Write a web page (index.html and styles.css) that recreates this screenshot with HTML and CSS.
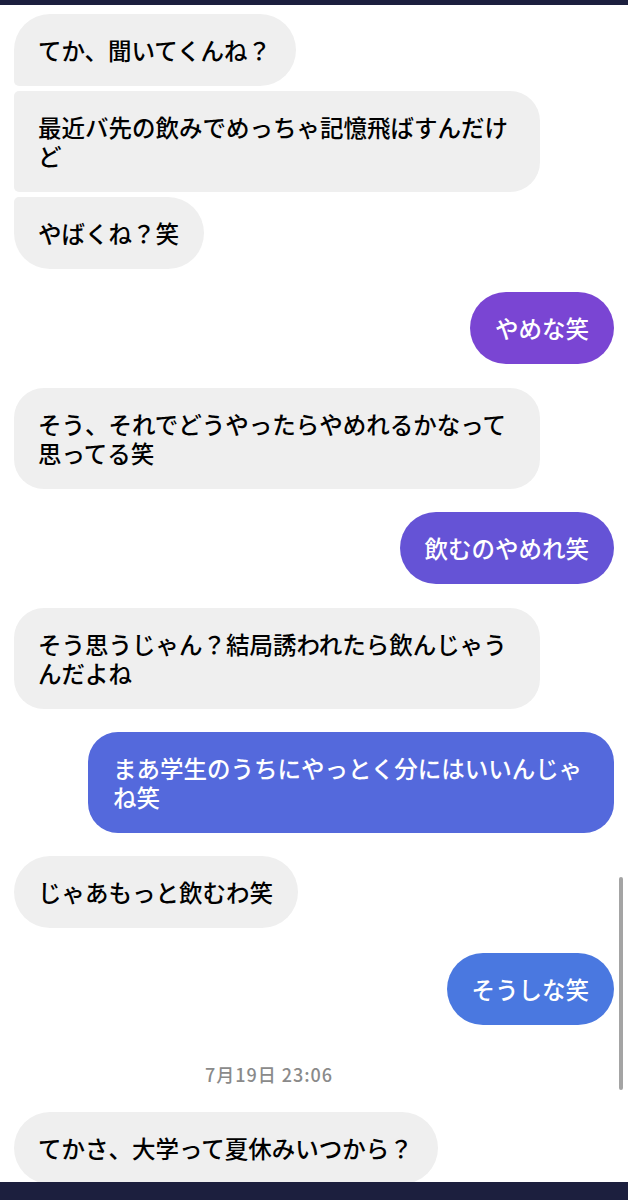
FILE: index.html
```html
<!DOCTYPE html>
<html lang="ja">
<head>
<meta charset="utf-8">
<title>Chat</title>
<link rel="stylesheet" href="styles.css">
</head>
<body>
<div class="screen">
  <div class="top-bar"></div>
  <div class="chat">
    <div class="row in"><div class="bubble recv first">てか、聞いてくんね？</div></div>
    <div class="row in grouped"><div class="bubble recv middle multi">最近バ先の飲みでめっちゃ記憶飛ばすんだけど</div></div>
    <div class="row in grouped"><div class="bubble recv last">やばくね？笑</div></div>

    <div class="row out"><div class="bubble sent c1">やめな笑</div></div>

    <div class="row in wide-1"><div class="bubble recv multi">そう、それでどうやったらやめれるかなって思ってる笑</div></div>

    <div class="row out"><div class="bubble sent c2">飲むのやめれ笑</div></div>

    <div class="row in wide-1"><div class="bubble recv multi">そう思うじゃん？結局誘われたら飲んじゃうんだよね</div></div>

    <div class="row out"><div class="bubble sent c3 multi">まあ学生のうちにやっとく分にはいいんじゃね笑</div></div>

    <div class="row in"><div class="bubble recv">じゃあもっと飲むわ笑</div></div>

    <div class="row out wide-2"><div class="bubble sent c4">そうしな笑</div></div>

    <div class="timestamp">7月19日 23:06</div>

    <div class="row in after-time"><div class="bubble recv">てかさ、大学って夏休みいつから？</div></div>
  </div>
  <div class="bottom-bar"></div>
  <div class="scrollbar"></div>
</div>
</body>
</html>
```

FILE: styles.css
```css
html, body {
  margin: 0;
  padding: 0;
  background: #ffffff;
}

.screen {
  position: relative;
  width: 628px;
  height: 1200px;
  overflow: hidden;
  display: flex;
  flex-direction: column;
  font-family: "Noto Sans CJK JP", "Noto Sans", sans-serif;
}

.top-bar {
  height: 5px;
  background: #1c1f3e;
  flex: none;
}

.chat {
  flex: 1;
  overflow: hidden;
  display: flex;
  flex-direction: column;
  padding: 9px 14px 0 14px;
}

.row {
  display: flex;
  flex: none;
  margin-top: 23px;
}

.row:first-child {
  margin-top: 0;
}

.row.grouped {
  margin-top: 5px;
}

.row.wide-1 {
  margin-top: 24px;
}

.row.wide-2 {
  margin-top: 25px;
}

.row.in {
  justify-content: flex-start;
}

.row.out {
  justify-content: flex-end;
}

.bubble {
  max-width: 526px;
  box-sizing: border-box;
  padding: 21.5px 25px 21.5px 25px;
  font-size: 23.5px;
  line-height: 29px;
  font-weight: 500;
  border-radius: 36px;
  word-break: normal;
  line-break: normal;
}

.bubble.multi {
  border-radius: 30px;
}

.recv {
  background: #efefef;
  color: #000000;
  padding-left: 24px;
}

.recv.first {
  border-bottom-left-radius: 5px;
}

.recv.middle {
  border-top-left-radius: 5px;
  border-bottom-left-radius: 5px;
}

.recv.last {
  border-top-left-radius: 5px;
}

.sent {
  color: #ffffff;
}

.sent.c1 { background: #7a45d3; }
.sent.c2 { background: #6553d6; }
.sent.c3 { background: #5469dc; }
.sent.c4 { background: #4a78e0; }

.timestamp {
  flex: none;
  margin-top: 38px;
  padding-right: 90px;
  text-align: center;
  font-size: 18px;
  line-height: 22px;
  letter-spacing: 1px;
  font-weight: 500;
  color: #8a8a8a;
}

.row.after-time {
  margin-top: 27px;
}

.bottom-bar {
  height: 18px;
  background: #1c1f3e;
  flex: none;
}

.scrollbar {
  position: absolute;
  left: 619px;
  top: 877px;
  width: 4px;
  height: 213px;
  border-radius: 2px;
  background: #a4a4a4;
}
```
